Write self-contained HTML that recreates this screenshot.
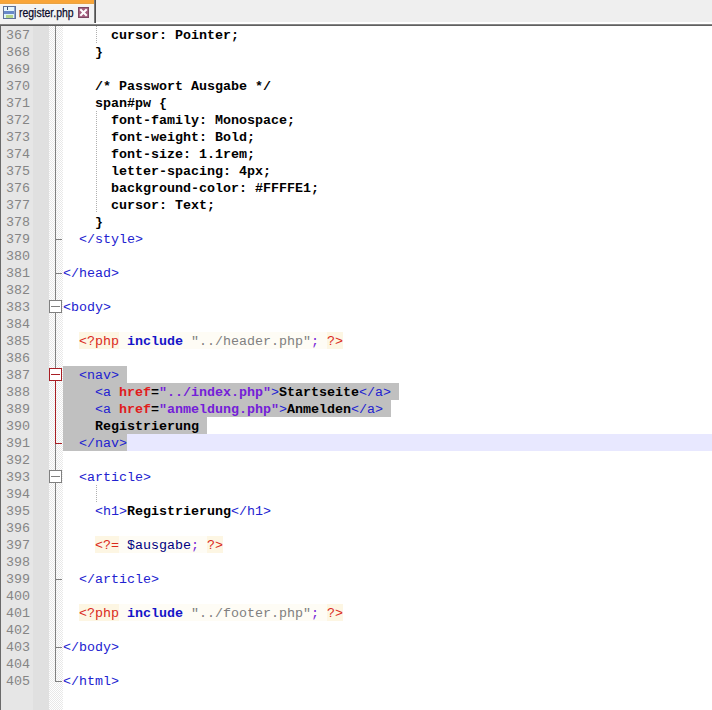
<!DOCTYPE html>
<html><head><meta charset="utf-8">
<style>
html,body{margin:0;padding:0;}
body{width:712px;height:710px;overflow:hidden;position:relative;background:#fff;font-family:"Liberation Mono",monospace;}
#tabbar{position:absolute;left:0;top:0;width:712px;height:22px;background:#EFEFEF;}
#tabhl{position:absolute;left:0;top:22px;width:712px;height:2px;background:#FFFFFF;}
#tabline{position:absolute;left:0;top:24px;width:712px;height:1px;background:#858585;border-bottom:1px solid #606060;}
#tab{position:absolute;left:0;top:0;width:94px;height:24px;background:#F3F3F3;}
#tabtop{position:absolute;left:0;top:0;width:94px;height:3px;background:#F9A538;border-bottom:1px solid #E8A345;box-shadow:0 1px 0 #FDF6EC;}
#tabr{position:absolute;left:94px;top:0;width:1px;height:23px;background:#7A7A7A;border-right:1px solid #505050;}
#tabtxt{position:absolute;left:19px;top:5px;font-family:"Liberation Sans",sans-serif;font-size:12px;color:#0A0A28;line-height:16px;white-space:pre;transform:scaleX(0.87);transform-origin:0 0;-webkit-text-stroke:0.25px #0A0A28;}
#gut0{position:absolute;left:0;top:26px;width:1px;height:684px;background:#6A6A6A;}
#gutn{position:absolute;left:1px;top:26px;width:32px;height:684px;background:#E6E6E6;}
#gutb{position:absolute;left:33px;top:26px;width:16px;height:684px;background:#E0E0E0;}
#gutf{position:absolute;left:49px;top:26px;width:14px;height:684px;
  background-color:#FFFFFF;
  background-image:linear-gradient(45deg,#E8E8E8 25%,transparent 25%,transparent 75%,#E8E8E8 75%),linear-gradient(45deg,#E8E8E8 25%,transparent 25%,transparent 75%,#E8E8E8 75%);
  background-size:2px 2px;background-position:0 0,1px 1px;}
.bgl{position:absolute;height:17px;}
.ln{position:absolute;left:63px;height:17px;line-height:21px;font-size:12px;letter-spacing:0px;white-space:pre;transform:scaleX(1.11111);transform-origin:0 0;}
.nm{position:absolute;left:6px;height:17px;line-height:21px;font-size:12px;letter-spacing:0px;transform:scaleX(1.1111);transform-origin:0 0;color:#858585;white-space:pre;}
.ig{position:absolute;left:96px;width:1px;background-image:linear-gradient(#B0B0B0 50%,transparent 50%);background-size:1px 2px;}
.d{color:#000;font-weight:bold;}
.t{color:#2222D0;}
.a{color:#E01C1C;font-weight:bold;}
.s{color:#7420D8;font-weight:bold;}
.q{color:#DA2A1C;}
.p{color:#000033;}
.w{color:#1515C8;font-weight:bold;}
.g{color:#808080;}
.o{color:#7A28D8;}
.v{color:#000080;}
#fold{position:absolute;left:0;top:0;}
</style></head><body>
<div id="tabbar"></div><div id="tabhl"></div><div id="tabline"></div>
<div id="tab"></div><div id="tabtop"></div><div id="tabr"></div>
<svg style="position:absolute;left:3px;top:6px" width="13" height="13" viewBox="0 0 13 13" shape-rendering="crispEdges">
<rect x="0" y="0" width="13" height="13" fill="#5F7299"/>
<rect x="1" y="1" width="11" height="11" fill="#D6EEFA"/>
<rect x="1" y="1" width="10" height="4" fill="#E6F6FD"/>
<rect x="4" y="1" width="1" height="3" fill="#404E70"/>
<rect x="1" y="5" width="11" height="3" fill="#6888C8"/>
<rect x="1" y="8" width="10" height="4" fill="#E0F4F8"/>
<rect x="3" y="9" width="7" height="3" fill="#B4D48A"/>
<rect x="11" y="1" width="1" height="11" fill="#8CA4D0"/>
</svg>
<div id="tabtxt">register.php</div>
<svg style="position:absolute;left:78px;top:7px" width="11" height="11" viewBox="0 0 11 11">
<rect x="0" y="0" width="11" height="11" fill="#7C4862"/>
<rect x="1" y="1" width="9" height="9" fill="#A35E7E"/>
<path d="M3 3 L8 8 M8 3 L3 8" stroke="#FFFFFF" stroke-width="2.1" stroke-linecap="square"/>
</svg>
<div id="gut0"></div><div id="gutn"></div><div id="gutb"></div><div id="gutf"></div>
<svg id="fold" width="712" height="710"><rect x="55" y="26" width="1" height="656" fill="#808080"/><rect x="56" y="239" width="6" height="1" fill="#808080"/><rect x="56" y="273" width="6" height="1" fill="#808080"/><rect x="56" y="579" width="6" height="1" fill="#808080"/><rect x="56" y="647" width="6" height="1" fill="#808080"/><rect x="56" y="681" width="6" height="1" fill="#808080"/><rect x="49.5" y="300.5" width="12" height="12" fill="#fff" stroke="#808080" stroke-width="1"/><rect x="51" y="306" width="9" height="1" fill="#808080"/><rect x="49.5" y="470.5" width="12" height="12" fill="#fff" stroke="#808080" stroke-width="1"/><rect x="51" y="476" width="9" height="1" fill="#808080"/><rect x="55" y="368" width="1" height="76" fill="#A81E24"/><rect x="56" y="443" width="6" height="1" fill="#A81E24"/><rect x="49.5" y="368.5" width="12" height="12" fill="#fff" stroke="#A81E24" stroke-width="1"/><rect x="51" y="374" width="9" height="1" fill="#A81E24"/></svg>
<div class="nm" style="top:26px">367</div><div class="nm" style="top:43px">368</div><div class="nm" style="top:60px">369</div><div class="nm" style="top:77px">370</div><div class="nm" style="top:94px">371</div><div class="nm" style="top:111px">372</div><div class="nm" style="top:128px">373</div><div class="nm" style="top:145px">374</div><div class="nm" style="top:162px">375</div><div class="nm" style="top:179px">376</div><div class="nm" style="top:196px">377</div><div class="nm" style="top:213px">378</div><div class="nm" style="top:230px">379</div><div class="nm" style="top:247px">380</div><div class="nm" style="top:264px">381</div><div class="nm" style="top:281px">382</div><div class="nm" style="top:298px">383</div><div class="nm" style="top:315px">384</div><div class="nm" style="top:332px">385</div><div class="nm" style="top:349px">386</div><div class="nm" style="top:366px">387</div><div class="nm" style="top:383px">388</div><div class="nm" style="top:400px">389</div><div class="nm" style="top:417px">390</div><div class="nm" style="top:434px">391</div><div class="nm" style="top:451px">392</div><div class="nm" style="top:468px">393</div><div class="nm" style="top:485px">394</div><div class="nm" style="top:502px">395</div><div class="nm" style="top:519px">396</div><div class="nm" style="top:536px">397</div><div class="nm" style="top:553px">398</div><div class="nm" style="top:570px">399</div><div class="nm" style="top:587px">400</div><div class="nm" style="top:604px">401</div><div class="nm" style="top:621px">402</div><div class="nm" style="top:638px">403</div><div class="nm" style="top:655px">404</div><div class="nm" style="top:672px">405</div>
<div class="bgl" style="top:604px;left:327px;width:16px;background:#FDF6E3"></div><div class="bgl" style="top:604px;left:319px;width:8px;background:#FEFCF5"></div><div class="bgl" style="top:604px;left:311px;width:8px;background:#FEFCF5"></div><div class="bgl" style="top:604px;left:191px;width:120px;background:#FEFCF5"></div><div class="bgl" style="top:604px;left:183px;width:8px;background:#FEFCF5"></div><div class="bgl" style="top:604px;left:127px;width:56px;background:#FEFCF5"></div><div class="bgl" style="top:604px;left:119px;width:8px;background:#FEFCF5"></div><div class="bgl" style="top:604px;left:79px;width:40px;background:#FDF6E3"></div><div class="bgl" style="top:536px;left:207px;width:16px;background:#FDF6E3"></div><div class="bgl" style="top:536px;left:199px;width:8px;background:#FEFCF5"></div><div class="bgl" style="top:536px;left:191px;width:8px;background:#FEFCF5"></div><div class="bgl" style="top:536px;left:127px;width:64px;background:#FEFCF5"></div><div class="bgl" style="top:536px;left:119px;width:8px;background:#FEFCF5"></div><div class="bgl" style="top:536px;left:95px;width:24px;background:#FDF6E3"></div><div class="bgl" style="top:332px;left:327px;width:16px;background:#FDF6E3"></div><div class="bgl" style="top:332px;left:319px;width:8px;background:#FEFCF5"></div><div class="bgl" style="top:332px;left:311px;width:8px;background:#FEFCF5"></div><div class="bgl" style="top:332px;left:191px;width:120px;background:#FEFCF5"></div><div class="bgl" style="top:332px;left:183px;width:8px;background:#FEFCF5"></div><div class="bgl" style="top:332px;left:127px;width:56px;background:#FEFCF5"></div><div class="bgl" style="top:332px;left:119px;width:8px;background:#FEFCF5"></div><div class="bgl" style="top:332px;left:79px;width:40px;background:#FDF6E3"></div><div class="bgl" style="top:434px;left:63px;right:0;background:#E8E8FF"></div><div class="bgl" style="top:366px;left:63px;width:64px;background:#C0C0C0"></div><div class="bgl" style="top:383px;left:63px;width:336px;background:#C0C0C0"></div><div class="bgl" style="top:400px;left:63px;width:328px;background:#C0C0C0"></div><div class="bgl" style="top:417px;left:63px;width:144px;background:#C0C0C0"></div><div class="bgl" style="top:434px;left:63px;width:64px;background:#C0C0C0"></div>
<div class="ig" style="top:26px;height:17px"></div><div class="ig" style="top:111px;height:102px"></div><div class="ig" style="top:485px;height:17px"></div>
<div class="ln" style="top:26px"><span class="d">      cursor: Pointer;</span></div><div class="ln" style="top:43px"><span class="d">    }</span></div><div class="ln" style="top:77px"><span class="d">    /* Passwort Ausgabe */</span></div><div class="ln" style="top:94px"><span class="d">    span#pw {</span></div><div class="ln" style="top:111px"><span class="d">      font-family: Monospace;</span></div><div class="ln" style="top:128px"><span class="d">      font-weight: Bold;</span></div><div class="ln" style="top:145px"><span class="d">      font-size: 1.1rem;</span></div><div class="ln" style="top:162px"><span class="d">      letter-spacing: 4px;</span></div><div class="ln" style="top:179px"><span class="d">      background-color: #FFFFE1;</span></div><div class="ln" style="top:196px"><span class="d">      cursor: Text;</span></div><div class="ln" style="top:213px"><span class="d">    }</span></div><div class="ln" style="top:230px"><span class="d">  </span><span class="t">&lt;/style&gt;</span></div><div class="ln" style="top:264px"><span class="t">&lt;/head&gt;</span></div><div class="ln" style="top:298px"><span class="t">&lt;body&gt;</span></div><div class="ln" style="top:332px"><span class="d">  </span><span class="q">&lt;?php</span><span class="p"> </span><span class="w">include</span><span class="p"> </span><span class="g">"../header.php"</span><span class="o">;</span><span class="p"> </span><span class="q">?&gt;</span></div><div class="ln" style="top:366px"><span class="d">  </span><span class="t">&lt;nav&gt;</span></div><div class="ln" style="top:383px"><span class="d">    </span><span class="t">&lt;a </span><span class="a">href</span><span class="d">=</span><span class="s">"../index.php"</span><span class="t">&gt;</span><span class="d">Startseite</span><span class="t">&lt;/a&gt;</span></div><div class="ln" style="top:400px"><span class="d">    </span><span class="t">&lt;a </span><span class="a">href</span><span class="d">=</span><span class="s">"anmeldung.php"</span><span class="t">&gt;</span><span class="d">Anmelden</span><span class="t">&lt;/a&gt;</span></div><div class="ln" style="top:417px"><span class="d">    Registrierung</span></div><div class="ln" style="top:434px"><span class="d">  </span><span class="t">&lt;/nav&gt;</span></div><div class="ln" style="top:468px"><span class="d">  </span><span class="t">&lt;article&gt;</span></div><div class="ln" style="top:502px"><span class="d">    </span><span class="t">&lt;h1&gt;</span><span class="d">Registrierung</span><span class="t">&lt;/h1&gt;</span></div><div class="ln" style="top:536px"><span class="d">    </span><span class="q">&lt;?=</span><span class="p"> </span><span class="v">$ausgabe</span><span class="o">;</span><span class="p"> </span><span class="q">?&gt;</span></div><div class="ln" style="top:570px"><span class="d">  </span><span class="t">&lt;/article&gt;</span></div><div class="ln" style="top:604px"><span class="d">  </span><span class="q">&lt;?php</span><span class="p"> </span><span class="w">include</span><span class="p"> </span><span class="g">"../footer.php"</span><span class="o">;</span><span class="p"> </span><span class="q">?&gt;</span></div><div class="ln" style="top:638px"><span class="t">&lt;/body&gt;</span></div><div class="ln" style="top:672px"><span class="t">&lt;/html&gt;</span></div>
</body></html>
